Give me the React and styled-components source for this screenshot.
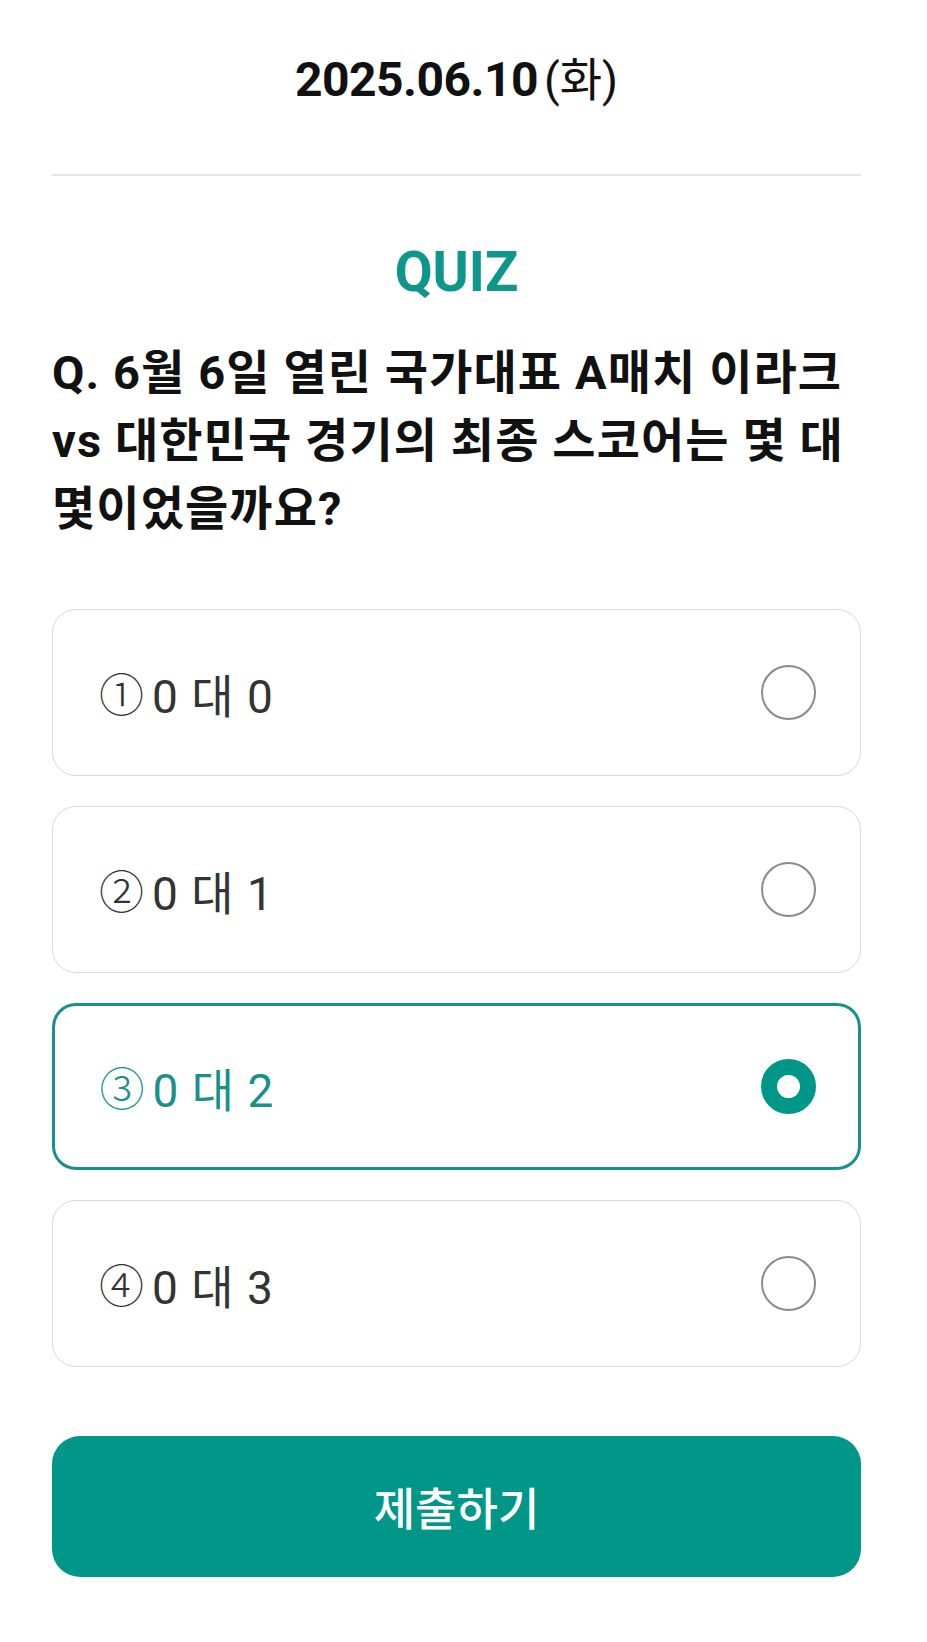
import React, { useState } from "react";
import styled, { createGlobalStyle } from "styled-components";

const GlobalStyle = createGlobalStyle`
    html, body {
        margin: 0;
        padding: 0;
        background: #ffffff;
    }
    body {
        font-family: Roboto, "Noto Sans CJK KR", "Noto Sans", sans-serif;
        color: #111111;
    }
    * { box-sizing: border-box; }
`;

const TEAL = "#009688";

const options = [
    { mark: "①", label: "0 대 0" },
    { mark: "②", label: "0 대 1" },
    { mark: "③", label: "0 대 2" },
    { mark: "④", label: "0 대 3" },
];

const App = () => {
    const [picked, setPicked] = useState(2);

    return (
        <>
            <GlobalStyle />
            <Page>
                <Header>
                    <DateText>
                        2025.06.10<Weekday>(화)</Weekday>
                    </DateText>
                </Header>
                <Title>QUIZ</Title>
                <Question>
                    Q. 6월 6일 열린 국가대표 A매치 이라크
                    <br />
                    vs 대한민국 경기의 최종 스코어는 몇 대
                    <br />
                    몇이었을까요?
                </Question>
                <OptionList>
                    {options.map((opt, i) => (
                        <OptionCard
                            key={opt.mark}
                            $active={picked === i}
                            onClick={() => setPicked(i)}
                        >
                            <OptionLabel $active={picked === i}>
                                <Mark>{opt.mark}</Mark>
                                {opt.label}
                            </OptionLabel>
                            <Radio $active={picked === i} />
                        </OptionCard>
                    ))}
                </OptionList>
                <SubmitBtn>제출하기</SubmitBtn>
            </Page>
        </>
    );
};

export default App;

const Page = styled.div`
    width: 927px;
    min-height: 1642px;
    padding: 0 66px 60px 52px;
    display: flex;
    flex-direction: column;
`;

const Header = styled.div`
    height: 176px;
    padding-top: 50px;
    display: flex;
    justify-content: center;
    align-items: flex-start;
    border-bottom: 2px solid #e6e6e6;
`;

const DateText = styled.div`
    font-size: 48px;
    line-height: 60px;
    font-weight: 700;
    color: #111;
    letter-spacing: -0.5px;
`;

const Weekday = styled.span`
    font-weight: 400;
    font-size: 46px;
    margin-left: 6px;
    letter-spacing: 0;
`;

const Title = styled.h2`
    margin: 63px 0 0;
    text-align: center;
    font-size: 55px;
    line-height: 67px;
    font-weight: 700;
    color: #0f968b;
`;

const Question = styled.p`
    margin: 33px 0 0;
    font-size: 47px;
    line-height: 68px;
    font-weight: 700;
    color: #111;
    letter-spacing: 1.1px;
`;

const OptionList = styled.div`
    margin-top: 66px;
    display: flex;
    flex-direction: column;
    gap: 30px;
`;

const OptionCard = styled.div`
    height: 167px;
    border-radius: 24px;
    border: ${p => (p.$active ? `3px solid #17918a` : `1.5px solid #d9d9d9`)};
    padding: 0 ${p => (p.$active ? "42.5px" : "44px")} 0 ${p => (p.$active ? "44.5px" : "46px")};
    display: flex;
    align-items: center;
    justify-content: space-between;
    background: #fff;
    cursor: pointer;
`;

const OptionLabel = styled.div`
    display: flex;
    align-items: center;
    font-size: 46px;
    font-weight: 400;
    color: ${p => (p.$active ? "#17918a" : "#333333")};
    word-spacing: 2px;
`;

const Mark = styled.span`
    margin-right: 8px;
    font-family: "Noto Sans CJK KR", sans-serif;
    font-size: 45px;
    font-weight: 300;
`;

const Radio = styled.span`
    width: 55px;
    height: 55px;
    border-radius: 50%;
    border: ${p => (p.$active ? `16px solid ${TEAL}` : `2px solid #8a8a8a`)};
    background: #fff;
    flex-shrink: 0;
`;

const SubmitBtn = styled.button`
    margin-top: 69px;
    height: 141px;
    width: 100%;
    border: none;
    border-radius: 28px;
    background: ${TEAL};
    color: #fff;
    font-family: Roboto, "Noto Sans CJK KR", sans-serif;
    font-size: 45px;
    font-weight: 500;
    cursor: pointer;
`;
